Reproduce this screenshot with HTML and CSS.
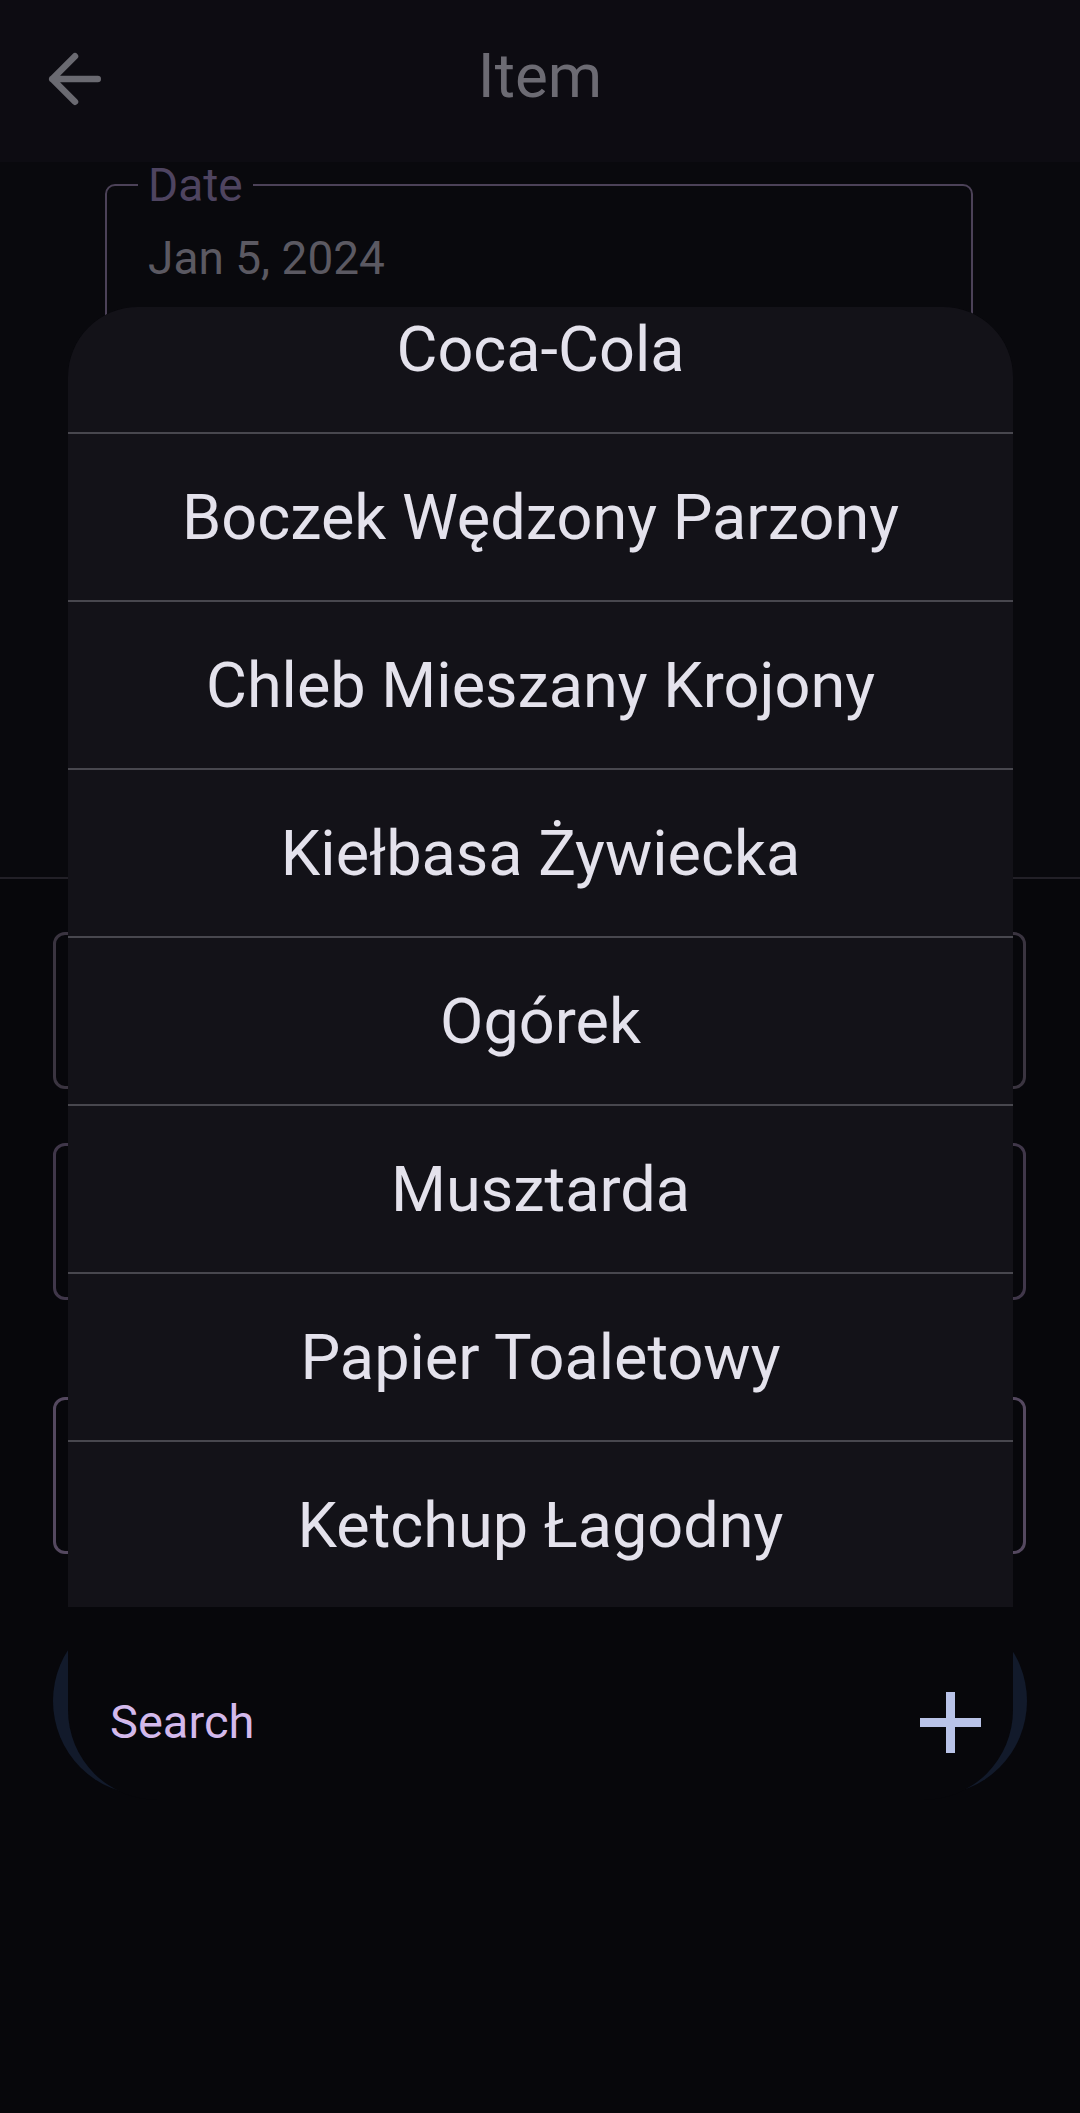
FILE: index.html
```html
<!DOCTYPE html>
<html lang="pl">
<head>
<meta charset="utf-8">
<title>Item</title>
<link rel="stylesheet" href="styles.css">
</head>
<body>
<div class="screen">
  <header class="topbar">
    <svg class="back" viewBox="0 0 24 24" width="78" height="78" aria-hidden="true">
      <path d="M19 12H5M12 5l-7 7 7 7" fill="none" stroke="#6a6a71" stroke-width="2" stroke-linecap="round" stroke-linejoin="round"/>
    </svg>
    <h1 class="title">Item</h1>
    <span class="spacer"></span>
  </header>

  <section class="upper">
    <fieldset class="date-field">
      <legend class="date-label">Date</legend>
      <div class="date-value">Jan 5, 2024</div>
    </fieldset>
  </section>

  <section class="lower">
    <div class="field field-a"></div>
    <div class="field field-b"></div>
    <div class="field field-c"></div>
    <div class="searchbar"></div>
  </section>

  <div class="popup">
    <ul class="options">
      <li class="option">Coca-Cola</li>
      <li class="option">Boczek Wędzony Parzony</li>
      <li class="option">Chleb Mieszany Krojony</li>
      <li class="option">Kiełbasa Żywiecka</li>
      <li class="option">Ogórek</li>
      <li class="option">Musztarda</li>
      <li class="option">Papier Toaletowy</li>
      <li class="option">Ketchup Łagodny</li>
    </ul>
    <div class="popup-search">
      <span class="search-hint">Search</span>
      <svg class="plus" viewBox="0 0 61 61" width="61" height="61" aria-hidden="true">
        <rect x="26" y="0" width="9" height="61" fill="#b9c3e8"/>
        <rect x="0" y="26" width="61" height="9" fill="#b9c3e8"/>
      </svg>
    </div>
  </div>
</div>
</body>
</html>
```

FILE: styles.css
```css
* { box-sizing: border-box; }

html, body {
  margin: 0;
  padding: 0;
  background: #07070b;
}

body {
  font-family: Roboto, "Noto Sans", "Liberation Sans", sans-serif;
  width: 1080px;
  height: 2113px;
  overflow: hidden;
}

.screen {
  position: relative;
  width: 1080px;
  height: 2113px;
  background: #07070b;
}

/* ---------- top bar ---------- */
.topbar {
  height: 162px;
  background: #0d0c12;
  display: grid;
  grid-template-columns: 1fr auto 1fr;
  align-items: start;
  padding-top: 40px;
}

.back {
  display: block;
  margin-left: 36px;
}

.title {
  margin: 0;
  margin-top: -3px;
  font-size: 62px;
  line-height: 78px;
  font-weight: 400;
  color: #6c6b73;
}

/* ---------- upper section (date) ---------- */
.upper {
  height: 717px;
  background: #09090d;
  border-bottom: 2px solid #222027;
  padding-top: 1px;
}

.date-field {
  margin: 0 0 0 105px;
  width: 868px;
  height: 220px;
  padding: 0 31px;
  border: 2px solid #4c4258;
  border-radius: 10px;
  min-width: 0;
}

.date-label {
  padding: 0 10px;
  font-size: 46px;
  line-height: 44px;
  color: #4e4460;
}

.date-value {
  margin: 24px 0 0 10px;
  font-size: 46px;
  line-height: 54px;
  color: #5b5962;
}

/* ---------- lower section (fields) ---------- */
.lower {
  padding-top: 53px;
  display: flex;
  flex-direction: column;
  align-items: flex-start;
}

.field {
  margin-left: 53px;
  width: 973px;
  height: 157px;
  border: 3px solid #3a3440;
  border-radius: 12px;
}

.field-b {
  margin-top: 54px;
  border-color: #40374a;
}

.field-c {
  margin-top: 97px;
  border-color: #54485f;
}

.searchbar {
  margin-top: 53px;
  margin-left: 53px;
  width: 974px;
  height: 188px;
  border-radius: 94px;
  background: #121a2b;
}

/* ---------- dropdown popup ---------- */
.popup {
  position: absolute;
  left: 68px;
  top: 307px;
  width: 945px;
  height: 1493px;
  border-radius: 70px 70px 90px 90px;
  overflow: hidden;
  background: #07070b;
  display: flex;
  flex-direction: column;
}

.options {
  list-style: none;
  margin: 0;
  padding: 0;
  flex: 0 0 1300px;
  height: 1300px;
  overflow: hidden;
  background: #131218;
}

.option {
  height: 168px;
  border-top: 2px solid #48474e;
  display: flex;
  align-items: center;
  justify-content: center;
  font-size: 63px;
  color: #e4e2ec;
  white-space: nowrap;
}

.option:first-child {
  margin-top: -43px;
}

.popup-search {
  display: flex;
  align-items: center;
  justify-content: space-between;
  height: 62px;
  margin-top: 84px;
  padding: 0 32px 0 42px;
}

.search-hint {
  font-size: 47px;
  line-height: 54px;
  color: #d3b9ec;
}

.plus {
  display: block;
}
```
